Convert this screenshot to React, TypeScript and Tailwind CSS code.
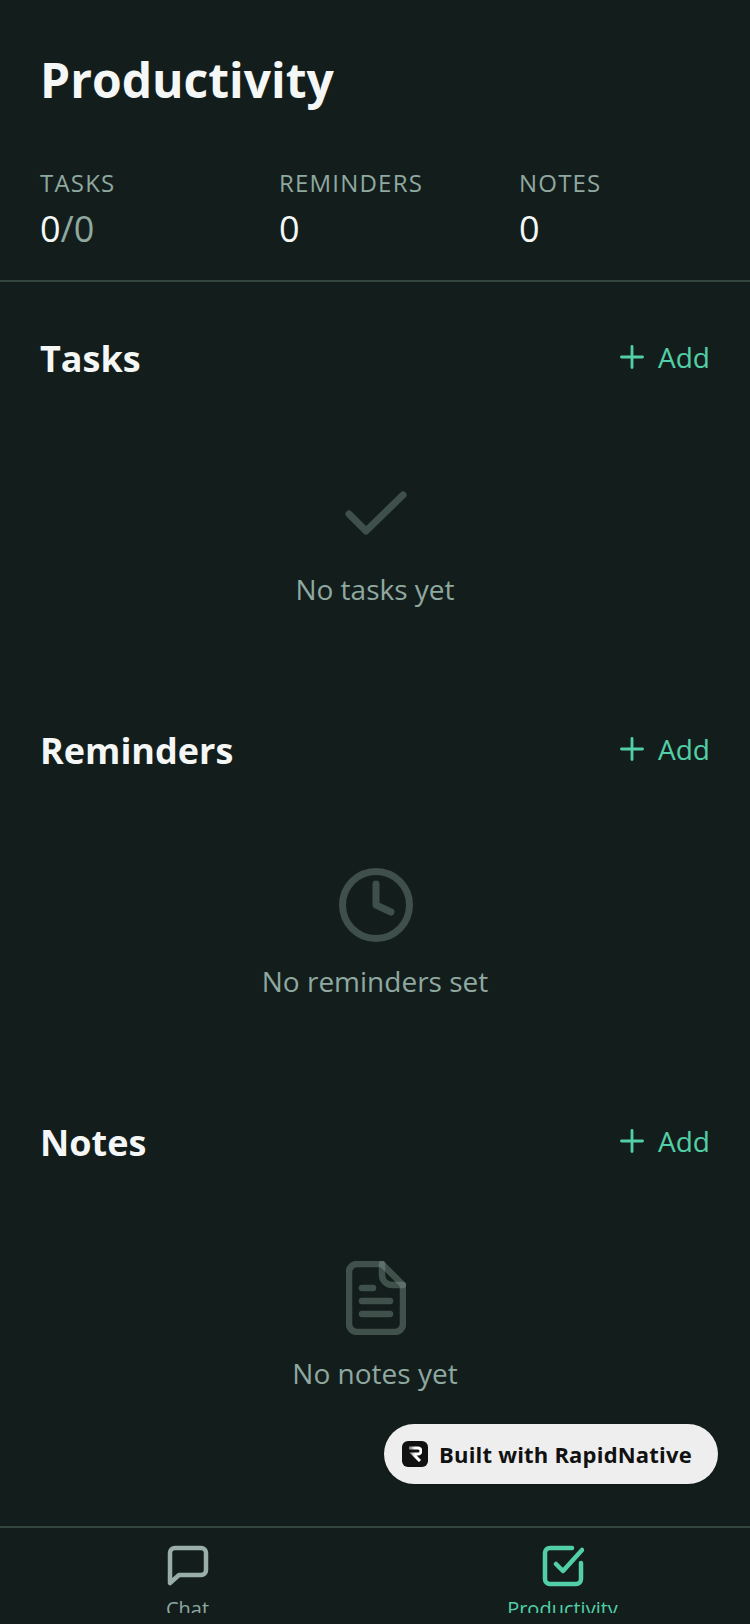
import { Plus } from "lucide-react";

const ICON = "#3f4f4c";

const CheckIcon = () => (
    <svg width="62" height="46" viewBox="0 0 62 46" fill="none" stroke={ICON} strokeWidth="7" strokeLinecap="round" strokeLinejoin="round">
        <path d="M4 23 L21 40 L58 4" />
    </svg>
);

const ClockIcon = () => (
    <svg width="76" height="76" viewBox="0 0 76 76" fill="none" stroke={ICON} strokeWidth="7" strokeLinecap="round" strokeLinejoin="round">
        <circle cx="38" cy="38" r="33.5" />
        <path d="M38 17 V38 L53 45" />
    </svg>
);

const NoteIcon = () => (
    <svg width="60" height="74" viewBox="0 0 60 74" fill="none" stroke="#8fa8a0" strokeOpacity="0.36" strokeWidth="6.5" strokeLinecap="round" strokeLinejoin="round">
        <path d="M36 3 H11 A8 8 0 0 0 3 11 V63 A8 8 0 0 0 11 71 H49 A8 8 0 0 0 57 63 V24 Z" />
        <path d="M36 3 V14 A10 10 0 0 0 46 24 H57" />
        <path d="M16 27 H27 M16 40 H44 M16 53 H44" />
    </svg>
);

const ChatIcon = () => (
    <svg width="42" height="42" viewBox="0 0 42 42" fill="none" stroke="#98aea7" strokeWidth="4.5" strokeLinecap="round" strokeLinejoin="round">
        <path d="M3 38 V8 A5 5 0 0 1 8 3 H34 A5 5 0 0 1 39 8 V25 A5 5 0 0 1 34 30 H12 Z" />
    </svg>
);

const TaskIcon = () => (
    <svg width="42" height="42" viewBox="0 0 42 42" fill="none" stroke="#52cfa6" strokeWidth="4.5" strokeLinecap="round" strokeLinejoin="round">
        <path d="M30 3 H8 A5 5 0 0 0 3 8 V34 A5 5 0 0 0 8 39 H34 A5 5 0 0 0 39 34 V18" />
        <path d="M14 19 L21 26 L40 5" />
    </svg>
);

const Stat = ({ label, children }: { label: string; children: React.ReactNode }) => (
    <div>
        <div className="text-2xl leading-8 tracking-[1.2px] text-[#8fa8a0]">{label}</div>
        <div className="mt-2 text-4xl leading-[44px] text-[#f4f7f6]">{children}</div>
    </div>
);

const Section = ({ title, icon, empty, iconBox }: { title: string; icon: React.ReactNode; empty: string; iconBox: string }) => (
    <section className="h-[392px] px-10 pt-[51px]">
        <div className="flex h-[52px] items-center justify-between">
            <h2 className="text-4xl font-bold text-[#f4f7f6]">{title}</h2>
            <button className="-mt-[4px] flex items-center gap-[8px] text-[28px] text-[#52cfa6]">
                <Plus size={36} strokeWidth={1.9} />
                Add
            </button>
        </div>
        <div className={`flex flex-col items-center ${iconBox}`}>
            {icon}
            <p className="text-[28px] leading-10 text-[#8fa8a0]">{empty}</p>
        </div>
    </section>
);

export default function App() {
    return (
        <div className="relative flex h-[1624px] w-[750px] flex-col overflow-hidden bg-[#131e1c] font-['Open_Sans','Noto_Sans',sans-serif]">
            <header className="h-[282px] border-b-2 border-[#35463f] px-10 pt-12">
                <h1 className="text-5xl leading-[64px] font-bold text-[#f4f7f6]">Productivity</h1>
                <div className="mt-[55px] grid grid-cols-[239px_240px_1fr]">
                    <Stat label="TASKS">
                        0<span className="text-[#8fa8a0]">/0</span>
                    </Stat>
                    <Stat label="REMINDERS">0</Stat>
                    <Stat label="NOTES">0</Stat>
                </div>
            </header>
            <main className="flex-1">
                <Section title="Tasks" icon={<CheckIcon />} empty="No tasks yet" iconBox="pt-[106px] pl-[2px] [&>p]:mt-[32px] [&>p]:-ml-[2px]" />
                <Section title="Reminders" icon={<ClockIcon />} empty="No reminders set" iconBox="pt-[90px] pl-[2px] [&>p]:mt-[18px] [&>p]:-ml-[2px]" />
                <Section title="Notes" icon={<NoteIcon />} empty="No notes yet" iconBox="pt-[92px] pl-[2px] [&>p]:mt-[18px] [&>p]:-ml-[2px]" />
            </main>
            <nav className="grid h-[98px] grid-cols-2 border-t-2 border-[#35463f]">
                <div className="flex flex-col items-center pt-[17px]">
                    <ChatIcon />
                    <div className="mt-[9px] h-[17px] overflow-hidden text-xl leading-[26px] text-[#8fa8a0]">Chat</div>
                </div>
                <div className="flex flex-col items-center pt-[17px]">
                    <TaskIcon />
                    <div className="mt-[9px] h-[17px] overflow-hidden text-xl leading-[26px] text-[#52cfa6]">Productivity</div>
                </div>
            </nav>
            <div className="absolute top-[1424px] left-[384px] flex h-[60px] w-[334px] items-center gap-[11px] rounded-full bg-[#eeeeee] pl-[18px] shadow-sm">
                <div className="flex h-[26px] w-[26px] items-center justify-center rounded-[6px] bg-[#111111]">
                    <svg width="14" height="16" viewBox="0 0 14 16" fill="none" strokeWidth="3">
                        <defs>
                            <linearGradient id="rapid-r" x1="0" y1="0" x2="1" y2="0">
                                <stop offset="0" stopColor="#777777" />
                                <stop offset="0.5" stopColor="#ffffff" />
                            </linearGradient>
                        </defs>
                        <path d="M1 2 H10 A3 3 0 0 1 10 8 H5 L12 15" stroke="url(#rapid-r)" />
                    </svg>
                </div>
                <span className="text-[22px] font-bold tracking-[0.2px] text-[#111111]">Built with RapidNative</span>
            </div>
        </div>
    );
}
